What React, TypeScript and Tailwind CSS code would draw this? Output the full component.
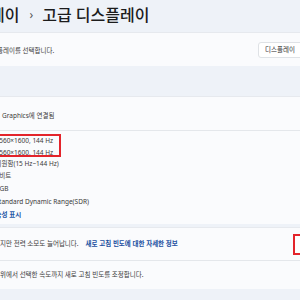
import React from 'react';

const rows = [
  { text: '2560×1600, 144 Hz', h: 'h-[12px]' },
  { text: '2560×1600, 144 Hz', h: 'h-[11px]' },
  { text: '지원함(15 Hz~144 Hz)', h: 'h-[12px]' },
  { text: '8비트', h: 'h-[12px]' },
  { text: 'RGB', h: 'h-[13px]' },
  { text: 'Standard Dynamic Range(SDR)', h: 'h-[13px]' },
];

export default function App() {
  return (
    <div className="w-[300px] h-[300px] overflow-hidden bg-[#eef2f8] font-['Noto_Sans','Noto_Sans_CJK_KR',sans-serif] text-[#3a3a3a]">
      {/* breadcrumb title */}
      <div className="h-[32px] flex items-center -ml-[10px] pb-[3px] text-[#1c1c1c] whitespace-nowrap">
        <span className="text-[16px] font-medium leading-none">레이</span>
        <span className="text-[12px] ml-[10px] text-[#555] leading-none">›</span>
        <span className="text-[16px] font-medium leading-none ml-[9px]">고급 디스플레이</span>
      </div>

      {/* display select */}
      <div className="h-[34px] flex items-center bg-[#fafbfd] border-t border-[#e6e9ee] pt-[2px] -mr-[10px]">
        <span className="text-[6.5px] -ml-[3px] whitespace-nowrap">플레이를 선택합니다.</span>
        <div className="ml-auto h-[16px] w-[52px] mt-[-1px] flex items-center pl-[6px] bg-white border border-[#dfe2e6] rounded-[3px] text-[6.5px] text-[#2b2b2b] whitespace-nowrap">
          디스플레이
        </div>
      </div>

      <div className="h-[30px]" />

      {/* display info */}
      <div className="h-[128px] bg-[#fafbfd] border-t border-[#e6e9ee]">
        <div className="h-[34px] flex items-end pb-[9px] pl-[2px] border-b border-[#e4e7eb] text-[6.5px] whitespace-nowrap">
          Graphics에 연결됨
        </div>
        <div className="relative pt-[4px] -ml-[4.5px] text-[6.5px] whitespace-nowrap">
          {rows.map((r, i) => (
            <div key={i} className={`${r.h} flex items-center`}>{r.text}</div>
          ))}
          <div className="h-[13px] flex items-center font-bold text-[#1f57a6]">속성 표시</div>
          <div className="absolute left-[-2px] top-[3px] w-[67px] h-[23px] border-2 border-[#e3242b]" />
        </div>
      </div>

      <div className="h-[3px]" />

      {/* refresh rate */}
      <div className="h-[62px] bg-[#fafbfd] border-t border-[#e6e9ee]">
        <div className="h-[33px] flex items-center border-b border-[#e4e7eb] -mr-[10px] text-[6.5px] whitespace-nowrap">
          <span>지만 전력 소모도 늘어납니다.</span>
          <span className="ml-[7px] font-bold text-[#1a4fa0]">새로 고침 빈도에 대한 자세한 정보</span>
          <div className="ml-auto w-[17px] h-[21px] border-2 border-[#e3242b] bg-white" />
        </div>
        <div className="h-[28px] flex items-center text-[6.5px] whitespace-nowrap">
          위에서 선택한 속도까지 새로 고침 빈도를 조정합니다.
        </div>
      </div>
    </div>
  );
}
